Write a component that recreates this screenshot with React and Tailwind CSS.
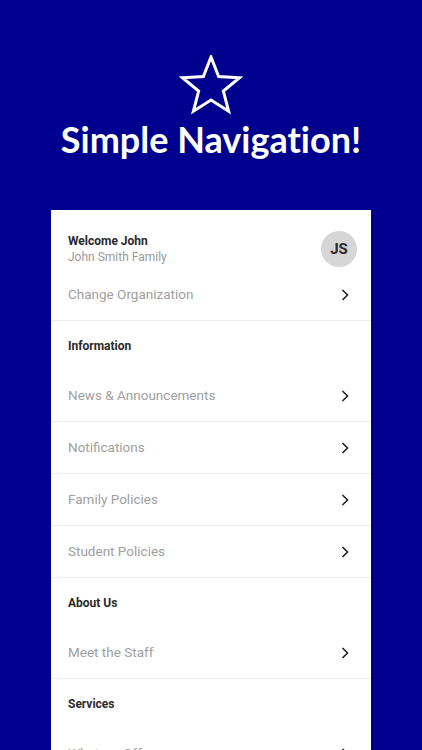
const sections = [
  { title: "Information", items: ["News & Announcements", "Notifications", "Family Policies", "Student Policies"] },
  { title: "About Us", items: ["Meet the Staff"] },
  { title: "Services", items: ["What we Offer"] },
];

function Chevron() {
  return (
    <svg width="10" height="14" viewBox="0 0 10 14" fill="none" className="shrink-0">
      <path d="M2.5 2 L7.5 7 L2.5 12" stroke="#222" strokeWidth="1.6" />
    </svg>
  );
}

function Star() {
  return (
    <svg width="66" height="62" viewBox="-33 -32 66 62" fill="none">
      <polygon
        points="0,-30 7.64,-10.52 28.53,-9.27 12.36,4.02 17.63,24.27 0,13 -17.63,24.27 -12.36,4.02 -28.53,-9.27 -7.64,-10.52"
        stroke="white"
        strokeWidth="3"
        strokeLinejoin="miter"
      />
    </svg>
  );
}

function Row({ label }) {
  return (
    <div className="h-[52px] flex items-center justify-between pl-[17px] pr-[21px] border-b border-[#ececec]">
      <span className="text-[13.5px] text-[#a0a0a0]">{label}</span>
      <Chevron />
    </div>
  );
}

export default function App() {
  return (
    <div className="w-[422px] h-[750px] overflow-hidden bg-[#00008f] font-['Roboto',sans-serif]">
      <div className="flex flex-col items-center pt-[55px]">
        <Star />
        <h1 className="text-white text-[36px] leading-[44px] font-bold font-['Lato',sans-serif] [font-variant-ligatures:none]">
          Simple Navigation!
        </h1>
      </div>

      <div className="mx-auto mt-[49px] w-[320px] bg-white">
        {/* Profile */}
        <div className="border-b border-[#ececec]">
          <div className="flex items-center justify-between pl-[17px] pr-[14px] pt-[21px]">
            <div className="flex flex-col">
              <span className="text-[12px] leading-[16px] font-bold text-[#2a2a2a]">Welcome John</span>
              <span className="text-[12px] leading-[16px] text-[#9a9a9a]">John Smith Family</span>
            </div>
            <div className="w-[36px] h-[36px] rounded-full bg-[#d6d6d6] flex items-center justify-center text-[15px] font-bold text-[#2a2a2a]">
              JS
            </div>
          </div>
          <div className="mt-[2px] h-[51px] flex items-center justify-between pl-[17px] pr-[21px]">
            <span className="text-[13.5px] text-[#a0a0a0]">Change Organization</span>
            <Chevron />
          </div>
        </div>

        {sections.map((s) => (
          <div key={s.title}>
            <div className="h-[49px] flex items-center pl-[17px]">
              <span className="text-[12px] font-bold text-[#2a2a2a]">{s.title}</span>
            </div>
            {s.items.map((it) => (
              <Row key={it} label={it} />
            ))}
          </div>
        ))}
      </div>
    </div>
  );
}
